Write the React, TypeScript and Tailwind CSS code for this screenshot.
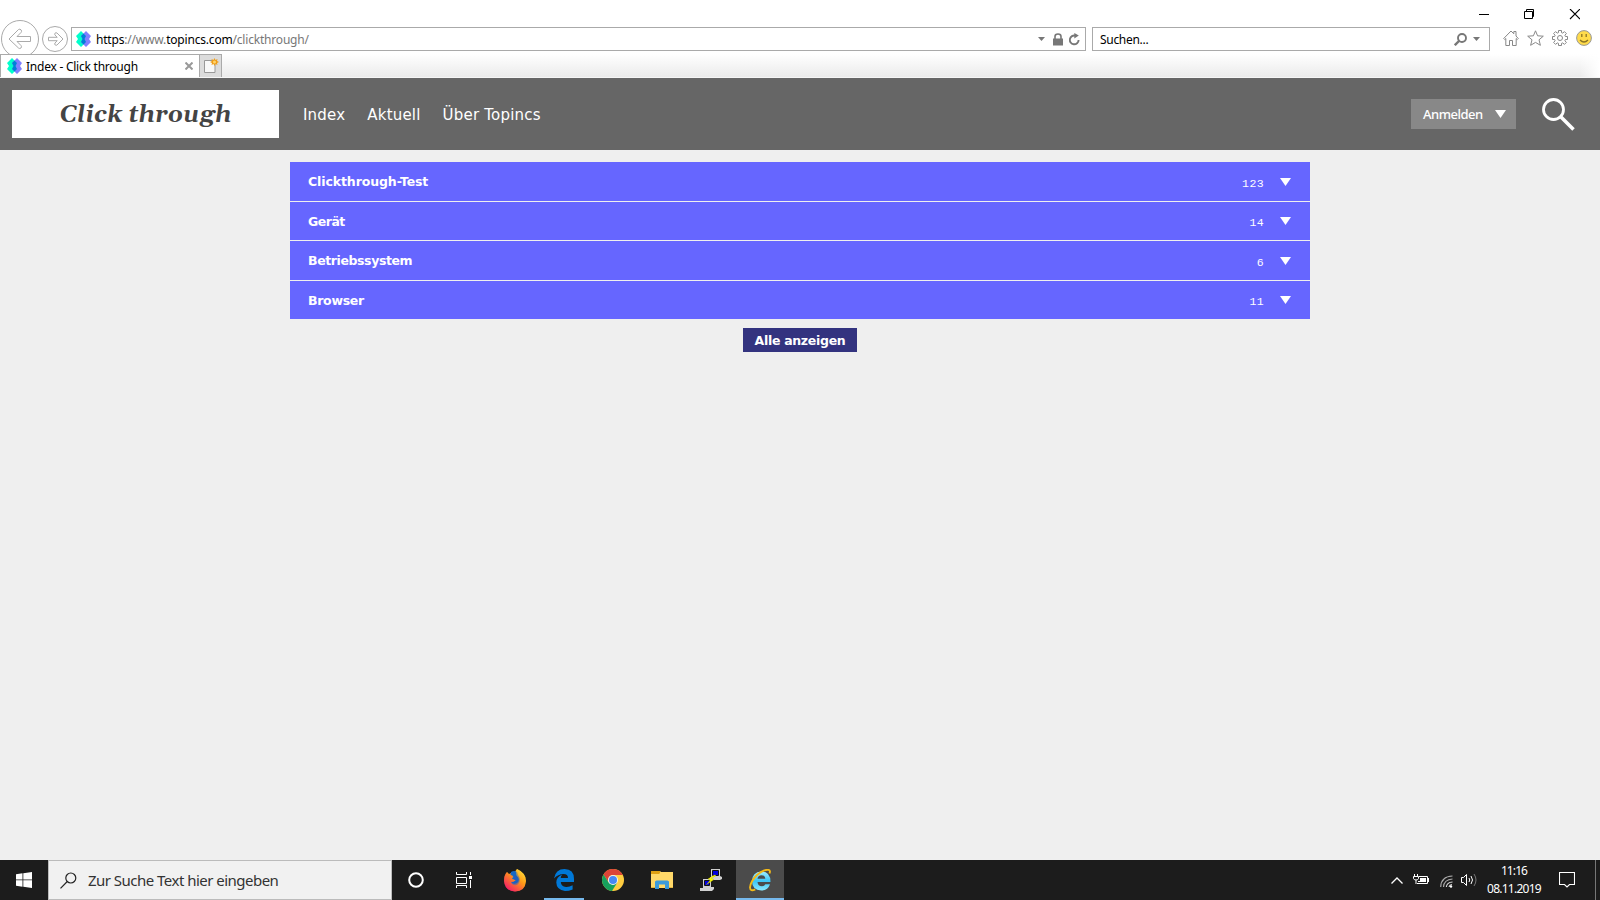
import type { ReactNode } from "react";

interface IndexEntry {
  label: string;
  count: number;
  height: string;
  tracking: string;
}

const entries: IndexEntry[] = [
  { label: "Clickthrough-Test", count: 123, height: "h-[39px]", tracking: "tracking-[-0.1px]" },
  { label: "Gerät", count: 14, height: "h-[38px]", tracking: "tracking-[-0.5px]" },
  { label: "Betriebssystem", count: 6, height: "h-[39px]", tracking: "tracking-[-0.4px]" },
  { label: "Browser", count: 11, height: "h-[38px]", tracking: "tracking-[-0.3px]" },
];

const Favicon = () => (
  <svg width="15" height="16" viewBox="0 0 15 16" className="shrink-0">
    <path d="M5 0L10 5L8 8L10 11L5 16L0 11L2 8L0 5Z" fill="#0fc" />
    <path d="M10 0L15 5L13 8L15 11L10 16L5 11L7 8L5 5Z" fill="#8080ff" />
    <path d="M7.5 2.5L10 5L8.5 8L10 11L7.5 13.5L5 11L6.5 8L5 5Z" fill="#0080d8" />
  </svg>
);

const Caret = ({ className }: { className?: string }) => (
  <svg width="11" height="8" viewBox="0 0 11 8" className={className}>
    <path d="M0 0H11L5.5 8Z" fill="#fff" />
  </svg>
);

const SmallCaret = ({ className }: { className?: string }) => (
  <svg width="7" height="4" viewBox="0 0 7 4" className={className}>
    <path d="M0 0H7L3.5 4Z" fill="#777" />
  </svg>
);

function WindowControls() {
  return (
    <div className="flex h-[27px] justify-end pt-[9px] pr-5">
      <svg width="101" height="11" viewBox="0 0 101 11" fill="none" stroke="#000">
        <path d="M0 5.5H10" />
        <path d="M45.5 2.5H53.5V9.5H45.5ZM47.5 2V.5H54.5V7.5H54" />
        <path d="M91 0L101 10M101 0L91 10" strokeWidth="1.1" />
      </svg>
    </div>
  );
}

function AddressRow() {
  return (
    <div className="flex h-[27px] items-start">
      <svg width="71" height="40" viewBox="0 0 71 40" fill="none" stroke="#aaa" className="-mt-[8px] shrink-0">
        <circle cx="20" cy="20" r="18.5" />
        <circle cx="55" cy="20" r="12.5" />
        <path d="M9 20L18.5 10.5Q20 9.5 21.2 11Q22 12.5 21 13.5L17 17.5H30.5V22.5H17L21 26.5Q22 27.8 21 29Q19.7 30 18.5 29Z" />
        <path d="M63 20L57 14Q56 13.3 55 14.2Q54.3 15.2 55 16L57.2 18.3H48.5V21.7H57.2L55 24Q54.3 25 55.2 26Q56.2 26.7 57 26Z" />
      </svg>
      <div className="flex h-6 w-[1015px] items-center border border-[#aaa] bg-white pl-[4px] text-[12px] text-[#777]">
        <Favicon />
        <span className="mt-[2px] ml-[5px] tracking-[-0.19px] whitespace-nowrap">
          <span className="text-black">https</span>://www.<span className="text-black">topincs.com</span>/clickthrough/
        </span>
        <SmallCaret className="ml-auto" />
        <svg width="10" height="13" viewBox="0 0 10 13" className="ml-[8px]">
          <path d="M2 6V3.5Q2 1 5 1Q8 1 8 3.5V6" fill="none" stroke="#777" strokeWidth="1.6" />
          <path d="M0 5.5H10V12.5H0Z" fill="#777" />
        </svg>
        <svg width="11" height="13" viewBox="0 0 11 13" fill="none" className="mr-[5px] ml-[6px]">
          <path d="M6.5 2.7A4.4 4.4 0 1 0 9.6 7" stroke="#777" strokeWidth="1.9" />
          <path d="M5.3 0L9.8 2.6L5.3 5.6Z" fill="#777" />
        </svg>
      </div>
      <div className="ml-[6px] flex h-6 w-[398px] items-center border border-[#aaa] bg-white pl-[7px] text-[12px] text-black">
        <span className="mt-[2px] tracking-[-0.3px]">Suchen...</span>
        <svg width="13" height="13" viewBox="0 0 13 13" fill="none" stroke="#777" className="ml-auto">
          <circle cx="8" cy="5" r="4" strokeWidth="1.9" />
          <path d="M5 8L.8 12.2" strokeWidth="2.4" />
        </svg>
        <SmallCaret className="mr-[9px] ml-[6px]" />
      </div>
      <div className="ml-[13px] flex items-center gap-[8px] pt-[3px]">
        <svg width="16" height="16" viewBox="0 0 16 16" fill="none" stroke="#888">
          <path d="M.7 8.5L8 1L10.8 3.8V1.5H13V6L15.3 8.5L14.3 9.5L13.2 8.5V15.5H9.5V10.5H6.5V15.5H2.8V8.5L1.7 9.5Z" />
        </svg>
        <svg width="17" height="16" viewBox="0 0 17 16" fill="none" stroke="#888">
          <path d="M8.5 .8L10.6 5.8L16.3 6.2L12 9.8L13.4 15.3L8.5 12.4L3.6 15.3L5 9.8L.7 6.2L6.4 5.8Z" />
        </svg>
        <svg width="16" height="16" viewBox="0 0 16 16" fill="none" stroke="#888">
          <path d="M6.5 .5H9.5V2.6L10.8 3.1L12.4 1.6L14.4 3.6L12.9 5.2L13.4 6.5H15.5V9.5H13.4L12.9 10.8L14.4 12.4L12.4 14.4L10.8 12.9L9.5 13.4V15.5H6.5V13.4L5.2 12.9L3.6 14.4L1.6 12.4L3.1 10.8L2.6 9.5H.5V6.5H2.6L3.1 5.2L1.6 3.6L3.6 1.6L5.2 3.1L6.5 2.6Z" />
          <circle cx="8" cy="8" r="2.5" />
        </svg>
        <svg width="16" height="16" viewBox="0 0 16 16" fill="none">
          <circle cx="8" cy="8" r="7.4" fill="#ffdb4b" stroke="#999" />
          <path d="M5.8 4V7M10.2 4V7M4 10Q8 14 12 10" stroke="#8b7425" strokeWidth="1.3" />
        </svg>
      </div>
    </div>
  );
}

function TabRow() {
  return (
    <div className="relative flex h-6 border-b border-[#f6f6f6] bg-linear-to-b from-white to-[#ebebeb] text-[12px] text-black">
      <div className="flex w-[200px] items-center border border-b-0 border-[#aaa] bg-white pl-[6px]">
        <Favicon />
        <span className="mt-[2px] ml-[4px] tracking-[-0.24px] whitespace-nowrap">Index - Click through</span>
        <svg width="8" height="8" viewBox="0 0 8 8" className="mr-[6px] ml-auto">
          <path d="M.5 .5L7.5 7.5M7.5 .5L.5 7.5" stroke="#999" strokeWidth="2" />
        </svg>
      </div>
      <div className="w-[22px] border border-b-0 border-l-0 border-[#aaa] bg-[#dcdcdc] pt-[3px] pl-[4px]">
        <svg width="15" height="17" viewBox="0 0 15 17">
          <path d="M.5 2.5H11V14.5H.5Z" fill="#f8f8f8" stroke="#999" />
          <path d="M10.5 0L11.5 2L13.5 1L13 3L15 4L13 5L13.5 7L11.5 6L10.5 8L9.5 6L7.5 7L8 5L6 4L8 3L7.5 1L9.5 2Z" fill="#ef9d18" />
          <circle cx="10.5" cy="4" r="1.5" fill="#ffd46c" />
        </svg>
      </div>
      {/* the toolbar shade fades out at the window edge */}
      <div className="ml-auto w-5 bg-linear-to-r from-transparent to-white" />
    </div>
  );
}

function SiteHeader() {
  return (
    <header className="flex h-[72px] items-center bg-[#666] pl-3 text-white">
      <div className="flex h-12 w-[267px] items-center justify-center bg-white font-['Gelasio','Georgia','DejaVu_Serif',serif] text-[24px] font-bold text-[#444] italic">
        <span className="mt-[2px] tracking-[0.05px] whitespace-nowrap">Click through</span>
      </div>
      <nav className="mt-[2px] ml-6 flex gap-[22px] font-['DejaVu_Sans',sans-serif] text-[15px] tracking-[0.2px] whitespace-nowrap">
        <a>Index</a>
        <a>Aktuell</a>
        <a>Über Topincs</a>
      </nav>
      <button className="ml-auto flex h-[30px] w-[105px] items-center bg-[#888] pl-3 text-[13px] font-medium">
        <span className="mt-[2px] tracking-[-0.5px]">Anmelden</span>
        <Caret className="mr-[10px] ml-auto" />
      </button>
      <svg width="33" height="34" viewBox="0 0 33 34" fill="none" stroke="#fff" className="mr-[25px] ml-[26px]">
        <circle cx="11.5" cy="12.5" r="10" strokeWidth="2.8" />
        <path d="M18.5 19.5L31.5 32.5" strokeWidth="3.6" />
      </svg>
    </header>
  );
}

function IndexList() {
  return (
    <main className="flex h-[710px] flex-col items-center bg-[#efefef] pt-3 font-['DejaVu_Sans',sans-serif] text-[12.5px] font-bold text-white">
      <div className="flex w-[1020px] flex-col gap-px">
        {entries.map((entry) => (
          <div key={entry.label} className={`flex items-center bg-[#66f] px-[18px] ${entry.height}`}>
            <span className={`mt-[2px] ${entry.tracking}`}>{entry.label}</span>
            <span className="mt-[4px] ml-auto font-['Liberation_Mono',monospace] text-[11.5px] font-normal tracking-[0.4px]">
              {entry.count}
            </span>
            <Caret className="mr-px ml-[16px]" />
          </div>
        ))}
      </div>
      <button className="mt-[9px] h-6 w-[114px] bg-[#33337f] pt-[2px] whitespace-nowrap">
        <span className="tracking-[-0.3px]">Alle anzeigen</span>
      </button>
    </main>
  );
}

function TaskbarCell({ children, running, active }: { children: ReactNode; running?: boolean; active?: boolean }) {
  return (
    <div className={`flex h-10 w-12 flex-col items-center ${active ? "bg-[#4b4b4b]" : ""}`}>
      <div className="flex h-[38px] items-center pt-[2px]">{children}</div>
      {running && <div className={`h-[2px] bg-[#76b9ed] ${active ? "w-12" : "w-10"}`} />}
    </div>
  );
}

const Firefox = () => (
  <svg width="22" height="23" viewBox="0 0 22 23">
    <defs>
      <linearGradient id="fox" x1="1" y1="0" x2="0.2" y2="1">
        <stop offset="0" stopColor="#fff044" />
        <stop offset=".45" stopColor="#ff9a16" />
        <stop offset="1" stopColor="#f5156c" />
      </linearGradient>
    </defs>
    <path d="M3 3L5 5L8 3.5L10 4L13 0Q22 4 22 12Q21 22.5 11 22.5Q1 22 0 12Q0 6 3 3Z" fill="url(#fox)" />
    <path d="M7 3Q10 1 13 3L14 6Q17 10 15 14Q12 18 8 15L7 13L10 12.5L12 11L8 10L9 7.5L6.5 6Z" fill="#1668c4" />
    <path d="M3 3L5 6L8 6L9.5 8L7 10L11 11L9 13H7Q9 16 13 13Q15 10 13 8Q11 3 13 0Q22 4 22 12Q21 22.5 11 22.5Q1 22 0 12Q0 6 3 3Z" fill="url(#fox)" fillOpacity=".55" />
    <path d="M11 6Q16 8 14.5 12.5Q12 16 8.5 14L12 11.5L9.5 10Z" fill="#1e5fc0" />
  </svg>
);

const Edge = () => (
  <svg width="20" height="22" viewBox="0 0 20 22">
    <path d="M0 9.5Q1.5 0 10.5 0Q20 0 20 10V13H6.8Q7 17.5 12 18Q15.5 18.2 18.6 16.3V20.4Q15 22 11 22Q2.5 21 2.3 13.5Q2.3 8 8.2 5.5Q6.8 7 6.7 9H14Q14 5 9.6 5Q4 5 0 9.5Z" fill="#0078d7" />
  </svg>
);

const Chrome = () => (
  <svg width="22" height="22" viewBox="0 0 22 22">
    <circle cx="11" cy="11" r="11" fill="#ffcd40" />
    <path d="M11 6H20.8A11 11 0 0 0 1.5 5.5L6.7 13.5A5 5 0 0 1 11 6Z" fill="#db4437" />
    <path d="M6.7 13.5L1.5 5.5A11 11 0 0 0 10 22L15 14Z" fill="#16a05d" />
    <circle cx="11" cy="11" r="5" fill="#f1f1f1" />
    <circle cx="11" cy="11" r="4" fill="#4688f4" />
  </svg>
);

const Folder = () => (
  <svg width="22" height="18" viewBox="0 0 22 18">
    <path d="M0 0H9L10 1H22V17H0Z" fill="#ffd869" />
    <path d="M0 0H9V2L8 3H0Z" fill="#dfa013" />
    <path d="M4 18V10.5L5.5 9.5H16.5L18 10.5V18H14V13.5H8V18Z" fill="#3b9bdb" />
    <path d="M0 16H4V17H0ZM18 16H22V17H18Z" fill="#e3b53f" />
  </svg>
);

const Putty = () => (
  <svg width="22" height="22" viewBox="0 0 22 22">
    <path d="M11 0H20V7L22 8V10L20 11H10V8H11Z" fill="#d0d0d0" />
    <path d="M12.5 1.5H18.5V6.5H12.5Z" fill="#0000e0" stroke="#111" />
    <path d="M3 10H11V18H14V20L12 22H0V19H3Z" fill="#d0d0d0" />
    <path d="M4.5 11.5H9.5V16.5H4.5Z" fill="#0000e0" stroke="#111" />
    <path d="M14.5 6L8 10L10.5 11L6.5 15.5L14 10.5L11.5 9.5L16 6.5Z" fill="#ff0" stroke="#bb0" strokeWidth=".4" />
  </svg>
);

const InternetExplorer = () => (
  <svg width="22" height="23" viewBox="0 0 22 23">
    <defs>
      <linearGradient id="ie" x1="0" y1="0" x2="0" y2="1">
        <stop offset="0" stopColor="#a1efff" />
        <stop offset=".5" stopColor="#3bc4f5" />
        <stop offset="1" stopColor="#8be9ff" />
      </linearGradient>
    </defs>
    <path fillRule="evenodd" d="M12.3 2.5Q21.5 2.5 21.5 13H8.5Q9 17.3 13 17.3Q15.5 17.3 16.3 15.3H21Q19 21.5 12.3 21.5Q3 21 3 12Q3.2 3 12.3 2.5ZM8.5 9.8H16.3Q16 6.3 12.5 6.3Q9 6.3 8.5 9.8Z" fill="url(#ie)" />
    <path d="M20.5 4.5Q21.8 1.2 19.3 .9Q14.5 .3 8 6Q1.5 12.5 1 18.5Q1.2 23 6.3 20.3" fill="none" stroke="#f4b917" strokeWidth="1.9" />
  </svg>
);

function Tray() {
  return (
    <div className="ml-auto flex h-10 items-center text-[12px] text-white">
      <svg width="12" height="7" viewBox="0 0 12 7" fill="none" stroke="#fff" className="mr-[10px]">
        <path d="M.5 6.5L6 1L11.5 6.5" strokeWidth="1.3" />
      </svg>
      <svg width="16" height="12" viewBox="0 0 16 12" fill="none" stroke="#fff" className="mr-[11px]">
        <path d="M6 2.5H14.5V9.5H4M1.5 0V2M4.5 0V2M.5 2.5H5.5V4.5Q5 6 3 6Q1 6 .5 4.5ZM3 6V10" />
        <path d="M7 4H13V8H5V7H7ZM15 4H16V8H15Z" fill="#fff" stroke="none" />
      </svg>
      <svg width="13" height="13" viewBox="0 0 13 13" fill="none" stroke="#aaa" className="mt-[2px] mr-[8px]">
        <path d="M.7 12Q1 1.5 12.5 1M3.5 12Q4 4.5 12.5 4" strokeWidth="1.2" />
        <path d="M6.3 12Q7 7.2 12.5 7M9 12Q9.5 9.7 12 9.5" stroke="#ddd" strokeWidth="1.1" />
        <circle cx="11" cy="11.5" r="1.2" fill="#fff" stroke="none" />
      </svg>
      <svg width="16" height="14" viewBox="0 0 16 14" fill="none" stroke="#fff" className="mr-[10px]">
        <path d="M.5 4.5H2.5L5.5 1.5V12.5L2.5 9.5H.5ZM8 5Q9.5 7 8 9M10 3Q13 7 10 11" />
        <path d="M13 1Q17 7 13 13" stroke="#777" />
      </svg>
      <div className="flex w-[54px] flex-col items-center leading-[18px] whitespace-nowrap">
        <span className="tracking-[-0.9px]">11:16</span>
        <span className="tracking-[-0.75px]">08.11.2019</span>
      </div>
      <svg width="16" height="16" viewBox="0 0 16 16" fill="none" stroke="#fff" className="mr-[20px] ml-[18px]">
        <path d="M.5 .5H15.5V12.5H10.5L8 15L5.5 12.5H.5Z" strokeWidth="1.1" />
      </svg>
      <div className="mr-1 h-10 w-px bg-[#777]" />
    </div>
  );
}

function Taskbar() {
  return (
    <footer className="flex h-10 bg-[#1c1c1c]">
      <div className="flex h-10 w-12 items-center justify-center">
        <svg width="16" height="16" viewBox="0 0 16 16" fill="#fff">
          <path d="M0 2.2L6.5 1.3V7.5H0ZM7.3 1.2L16 0V7.5H7.3ZM0 8.3H6.5V14.7L0 13.8ZM7.3 8.3H16V16L7.3 14.8Z" />
        </svg>
      </div>
      <div className="flex h-10 w-[344px] items-center border border-[#bbb] bg-[#f1f1f1] pl-[11px] text-[15px] text-[#333]">
        <svg width="17" height="17" viewBox="0 0 17 17" fill="none" stroke="#222" strokeWidth="1.2">
          <circle cx="10.8" cy="6" r="5" />
          <path d="M7.3 9.5L.5 16.3" />
        </svg>
        <span className="ml-[11px] tracking-[-0.52px] whitespace-nowrap">Zur Suche Text hier eingeben</span>
      </div>
      <TaskbarCell>
        <svg width="16" height="16" viewBox="0 0 16 16" fill="none" stroke="#fff">
          <circle cx="8" cy="8" r="6.8" strokeWidth="2" />
        </svg>
      </TaskbarCell>
      <TaskbarCell>
        <svg width="17" height="16" viewBox="0 0 17 16" fill="none" stroke="#fff" className="-mt-px">
          <path d="M.5 0V2.5H10.5V0M.5 5.5H10.5V11.5H.5ZM.5 16V13.5H10.5V16M14.5 0V3M14.5 8V16" />
          <path d="M13 4H16V7H13Z" fill="#fff" stroke="none" />
        </svg>
      </TaskbarCell>
      <div className="ml-[3px] flex gap-px">
        <TaskbarCell><Firefox /></TaskbarCell>
        <TaskbarCell running><Edge /></TaskbarCell>
        <TaskbarCell><Chrome /></TaskbarCell>
        <TaskbarCell><Folder /></TaskbarCell>
        <TaskbarCell><Putty /></TaskbarCell>
        <TaskbarCell running active><InternetExplorer /></TaskbarCell>
      </div>
      <Tray />
    </footer>
  );
}

export default function App() {
  return (
    <div className="h-[900px] w-[1600px] overflow-hidden bg-white font-['Noto_Sans','Open_Sans',sans-serif]">
      <WindowControls />
      <AddressRow />
      <TabRow />
      <SiteHeader />
      <IndexList />
      <Taskbar />
    </div>
  );
}
